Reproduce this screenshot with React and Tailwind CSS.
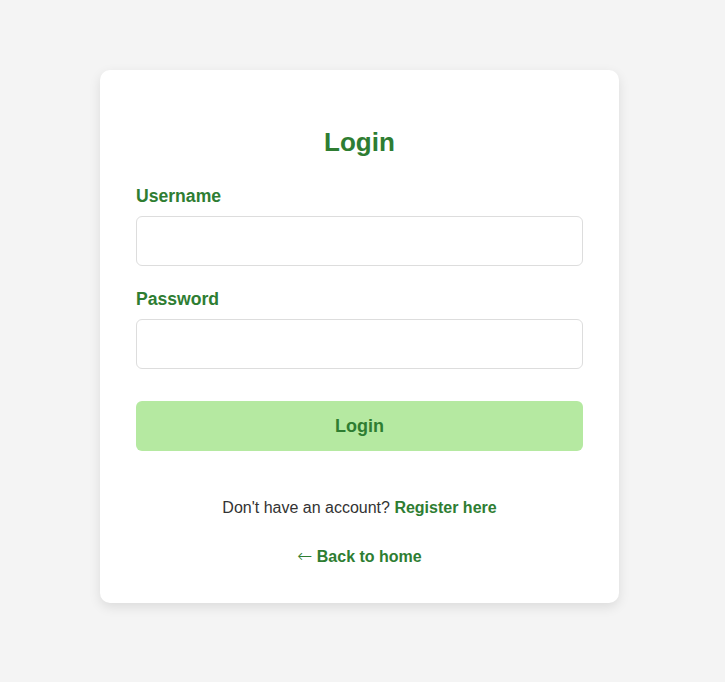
import React from "react";

export default function App() {
  return (
    <div className="min-h-[682px] w-full bg-[#f4f4f4] pt-[70px] pl-[100px]" style={{ fontFamily: '"Liberation Sans", Arial, sans-serif' }}>
      <div className="w-[519px] rounded-[10px] bg-white px-[36px] pt-[36px] pb-[37px] shadow-[0_4px_12px_rgba(0,0,0,0.1)]">
        <h2 className="mt-[21px] text-center text-[26px] leading-[30px] font-bold text-[#2e7d32]">Login</h2>
        <form onSubmit={(e) => e.preventDefault()}>
          <label className="mt-[29px] mb-[10px] block text-[17.6px] leading-[20px] font-bold text-[#2e7d32]">Username</label>
          <input type="text" className="block h-[50px] w-full rounded-[6px] border border-[#dddddd] bg-white px-[12px] text-[16px] outline-none" />
          <label className="mt-[23px] mb-[10px] block text-[17.6px] leading-[20px] font-bold text-[#2e7d32]">Password</label>
          <input type="password" className="block h-[50px] w-full rounded-[6px] border border-[#dddddd] bg-white px-[12px] text-[16px] outline-none" />
          <button type="submit" className="mt-[32px] block h-[50px] w-full rounded-[6px] bg-[#b5e9a1] text-[18px] font-bold text-[#2e7d32]">Login</button>
        </form>
        <p className="mt-[48px] text-center text-[16px] leading-[18px] text-[#333333]">
          Don't have an account? <a href="#" className="font-bold text-[#2e7d32]">Register here</a>
        </p>
        <p className="mt-[31px] text-center text-[16px] leading-[18px]">
          <a href="#" className="font-bold text-[#2e7d32]"><span className="text-[18px] leading-[0] font-extralight" style={{ fontFamily: '"DejaVu Sans", sans-serif' }}>←</span> Back to home</a>
        </p>
      </div>
    </div>
  );
}
